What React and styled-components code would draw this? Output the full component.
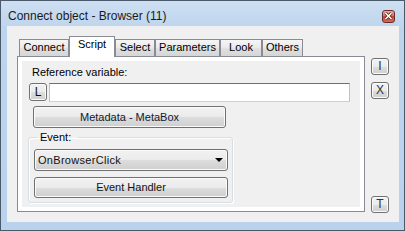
import styled, { createGlobalStyle } from "styled-components";

const GlobalStyle = createGlobalStyle`
  html, body { margin: 0; padding: 0; }
  body {
    width: 405px;
    height: 231px;
    overflow: hidden;
    font-family: "Liberation Sans", Arial, sans-serif;
    font-size: 11px;
    color: #000;
  }
  * { box-sizing: border-box; }
`;

const Window = styled.div`
  width: 405px;
  height: 231px;
  border: 1px solid #4b5a6a;
  background: linear-gradient(#cddff2, #bdd4ed 30px, #bad2ec);
  display: flex;
  flex-direction: column;
  padding: 0 5px 8px 6px;
`;

const TitleBar = styled.div`
  height: 25px;
  display: flex;
  align-items: center;
  justify-content: space-between;
  padding: 5px 4px 0 1px;
  font-size: 12px;
  color: #1a1a1a;
`;

const CloseBox = styled.div`
  width: 13px;
  height: 13px;
  border: 1px solid #6a2c26;
  border-radius: 3px;
  background: linear-gradient(#eab0a6, #d06c5e 50%, #c24a3c 50%, #cf6a58);
  display: flex;
  align-items: center;
  justify-content: center;
`;

const Client = styled.div`
  flex: 1;
  background: #f0f0f0;
  display: flex;
  gap: 6px;
  padding: 10px 0 0 10px;
`;

const LeftCol = styled.div`
  width: 348px;
  display: flex;
  flex-direction: column;
`;

const TabRow = styled.div`
  height: 21px;
  margin-bottom: -1px;
  padding-left: 2px;
  display: flex;
  align-items: flex-end;
`;

const Tab = styled.div`
  width: ${(p) => p.$w}px;
  height: ${(p) => (p.$active ? 21 : 17)}px;
  margin-bottom: ${(p) => (p.$active ? 0 : 1)}px;
  border: 1px solid #898c95;
  border-bottom: none;
  padding-top: 1px;
  line-height: 13px;
  text-align: center;
  white-space: nowrap;
  background: ${(p) =>
    p.$active
      ? "#ffffff"
      : "linear-gradient(#f5f5f5, #ebebeb 45%, #dfdfdf 55%, #d6d6d6)"};
  position: relative;
  z-index: ${(p) => (p.$active ? 2 : 1)};
`;

const Panel = styled.div`
  height: 156px;
  border: 1px solid #898c95;
  background: #ffffff;
  padding: 4px;
  display: flex;
`;

const Page = styled.div`
  flex: 1;
  background: #f0f0f0;
  padding: 5px 0 0 6px;
  display: flex;
  flex-direction: column;
  align-items: flex-start;
`;

const Label = styled.div`
  margin-left: 4px;
  line-height: 13px;
`;

const FieldRow = styled.div`
  margin: 4px 0 0 1px;
  display: flex;
  gap: 2px;
`;

const Button = styled.div`
  width: ${(p) => p.$w}px;
  height: ${(p) => p.$h}px;
  border: 1px solid #707070;
  border-radius: 3px;
  background: linear-gradient(#f2f2f2, #ebebeb 50%, #dddddd 50%, #cfcfcf);
  box-shadow: inset 0 0 0 1px #fbfbfb;
  display: flex;
  align-items: center;
  justify-content: center;
  line-height: 13px;
  font-size: ${(p) => p.$fs || 11}px;
  color: #111;
`;

const TextInput = styled.div`
  width: 301px;
  height: 19px;
  background: #ffffff;
  border: 1px solid;
  border-color: #3d7bad #a4c9e3 #b7d9ed #a4c9e3;
`;

const MetaButton = styled(Button)`
  margin: 4px 0 0 5px;
  color: #0d1a33;
`;

const Group = styled.fieldset`
  width: 205px;
  margin: 3px 0 0 0;
  padding: 5px 4px 4px 5px;
  border: 1px solid #d5dfe5;
  border-radius: 3px;
  box-shadow: inset 1px 1px 0 #ffffff, 1px 1px 0 #ffffff;
  display: flex;
  flex-direction: column;
  gap: 6px;
  min-width: 0;
`;

const Legend = styled.legend`
  margin-left: 4px;
  padding: 0 7px 0 2px;
  line-height: 13px;
`;

const Select = styled(Button)`
  justify-content: space-between;
  padding: 0 4px 0 3px;
  letter-spacing: 0.3px;
`;

const Arrow = styled.span`
  width: 0;
  height: 0;
  border-left: 4px solid transparent;
  border-right: 4px solid transparent;
  border-top: 4px solid #000;
`;

const RightCol = styled.div`
  height: 177px;
  display: flex;
  flex-direction: column;
  gap: 7px;
  padding-top: 22px;
`;

const SideButton = styled(Button)`
  color: #333;
`;

const BottomButton = styled(SideButton)`
  margin-top: auto;
`;

const tabs = [
  ["Connect", 50],
  ["Script", 46],
  ["Select", 40],
  ["Parameters", 65],
  ["Look", 42],
  ["Others", 41],
];

export default function App() {
  return (
    <>
      <GlobalStyle />
      <Window>
        <TitleBar>
          <span>Connect object - Browser (11)</span>
          <CloseBox>
            <svg width="9" height="8" viewBox="0 0 9 8">
              <path d="M1.5 1 L7.5 7 M7.5 1 L1.5 7" stroke="#5a1e18" strokeWidth="3" />
              <path d="M1.5 1 L7.5 7 M7.5 1 L1.5 7" stroke="#ffffff" strokeWidth="1.6" />
            </svg>
          </CloseBox>
        </TitleBar>
        <Client>
          <LeftCol>
            <TabRow>
              {tabs.map(([name, w]) => (
                <Tab key={name} $w={w} $active={name === "Script"}>
                  {name}
                </Tab>
              ))}
            </TabRow>
            <Panel>
              <Page>
                <Label>Reference variable:</Label>
                <FieldRow>
                  <Button $w={18} $h={18} $fs={12}>L</Button>
                  <TextInput />
                </FieldRow>
                <MetaButton $w={193} $h={22}>Metadata - MetaBox</MetaButton>
                <Group>
                  <Legend>Event:</Legend>
                  <Select $w={194} $h={22}>
                    <span>OnBrowserClick</span>
                    <Arrow />
                  </Select>
                  <Button $w={194} $h={21}>Event Handler</Button>
                </Group>
              </Page>
            </Panel>
          </LeftCol>
          <RightCol>
            <SideButton $w={18} $h={17} $fs={12}>I</SideButton>
            <SideButton $w={18} $h={17} $fs={12}>X</SideButton>
            <BottomButton $w={18} $h={17} $fs={12}>T</BottomButton>
          </RightCol>
        </Client>
      </Window>
    </>
  );
}
